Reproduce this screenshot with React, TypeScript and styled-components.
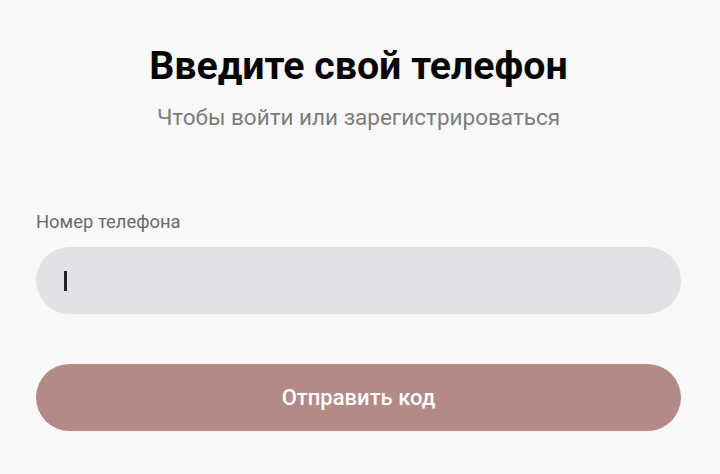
import React from "react";
import styled, { createGlobalStyle } from "styled-components";

const Global = createGlobalStyle`
  html, body {
    margin: 0;
    padding: 0;
    background: #f9f8f9;
  }
  body {
    font-family: Roboto, "Noto Sans", "Liberation Sans", sans-serif;
  }
`;

const Page = styled.div`
  width: 720px;
  height: 474px;
  box-sizing: border-box;
  padding: 42px 39px 0 36px;
  display: flex;
  flex-direction: column;
  background: #f9f8f9;
`;

const Title = styled.h1`
  margin: 0;
  font-size: 39.3px;
  line-height: 48px;
  font-weight: 700;
  color: #050505;
  text-align: center;
`;

const Subtitle = styled.p`
  margin: 13px 0 0;
  font-size: 22.5px;
  line-height: 28px;
  font-weight: 400;
  color: #7d7d7d;
  text-align: center;
`;

const Field = styled.label`
  margin-top: 80px;
  display: flex;
  flex-direction: column;
  gap: 13.6px;
`;

const Label = styled.span`
  font-size: 18.4px;
  line-height: 22px;
  color: #6a6a6a;
`;

const InputBox = styled.div`
  height: 67px;
  border-radius: 34px;
  background: #e2e2e6;
  display: flex;
  align-items: center;
  padding: 0 28px;
`;

const Caret = styled.span`
  width: 2.5px;
  height: 20px;
  margin-top: 2px;
  background: #222;
`;

const Button = styled.button`
  margin-top: 50px;
  height: 67px;
  border: none;
  border-radius: 34px;
  background: #b38a85;
  color: #ffffff;
  font-family: Roboto, "Noto Sans", sans-serif;
  font-size: 22px;
  font-weight: 500;
  display: flex;
  align-items: center;
  justify-content: center;
  cursor: pointer;
`;

export default function App() {
  return (
    <>
      <Global />
      <Page>
        <Title>Введите свой телефон</Title>
        <Subtitle>Чтобы войти или зарегистрироваться</Subtitle>
        <Field>
          <Label>Номер телефона</Label>
          <InputBox>
            <Caret />
          </InputBox>
        </Field>
        <Button type="button">Отправить код</Button>
      </Page>
    </>
  );
}
